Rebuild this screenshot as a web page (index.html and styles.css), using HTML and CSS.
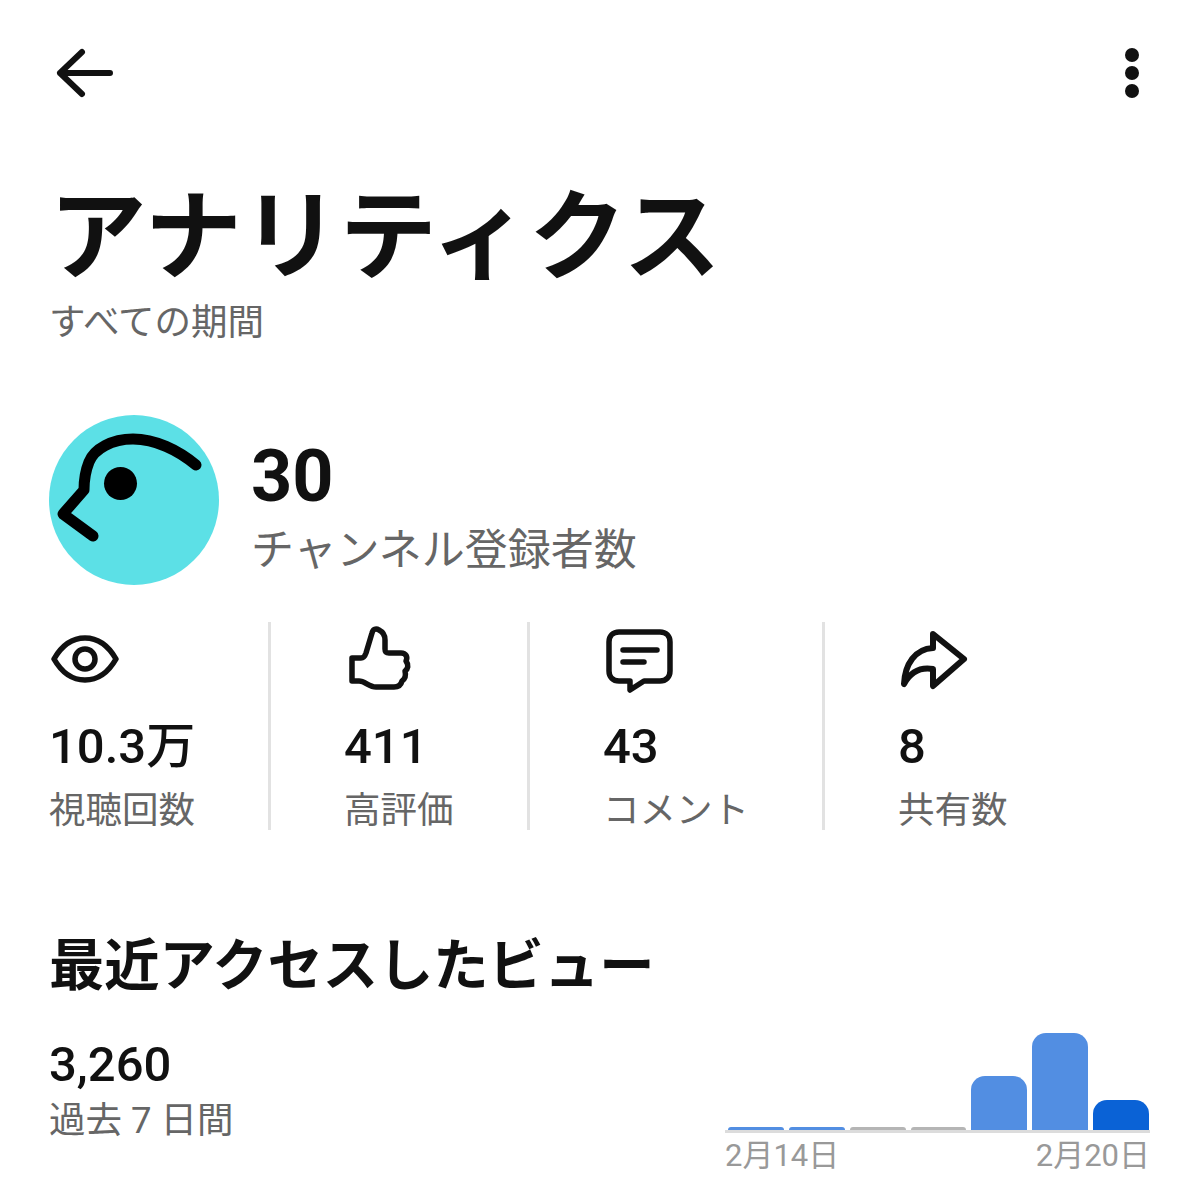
FILE: index.html
```html
<!DOCTYPE html>
<html lang="ja">
<head>
  <meta charset="UTF-8">
  <title>アナリティクス</title>
  <link rel="stylesheet" href="styles.css">
</head>
<body>

  <header class="topbar">
    <svg class="icon-back" viewBox="49 44 70 58">
      <path d="M110 73H60M82 52L60 73L82 94" />
    </svg>
    <div class="menu-dots"><span></span><span></span><span></span></div>
  </header>

  <h1 class="title">アナリティクス</h1>
  <p class="period">すべての期間</p>

  <section class="channel">
    <svg class="avatar" viewBox="49 415 170 170">
      <circle cx="134" cy="500" r="85" fill="#5ce0e6" />
      <path d="M196 465C178 450 155 439 133 439C112 439 94 449 89 462C85 472 84 480 84 490L63 514L93 536" />
      <circle cx="120.500" cy="483.500" r="16.500" fill="#000" />
    </svg>
    <div class="channel-info">
      <div class="subs-count">30</div>
      <div class="subs-label">チャンネル登録者数</div>
    </div>
  </section>

  <section class="stats">
    <div class="stat stat-views">
      <svg class="stat-icon" viewBox="49 625 70 70">
        <path d="M54 659C62 645 73 638 85 638C97 638 108 645 116 659C108 673 97 680 85 680C73 680 62 673 54 659Z" />
        <circle cx="85" cy="659" r="10" />
      </svg>
      <div class="stat-num">10.3万</div>
      <div class="stat-label">視聴回数</div>
    </div>
    <div class="stat stat-likes">
      <svg class="stat-icon" viewBox="344 625 70 70">
        <path d="M352 658H361C364 658 365 656 366 653L372 633C373 629 376 628 379 630C383 632 385 635 385 640V649C385 652 386 653 389 653H401C406 653 408 657 406 661C409 665 408 669 405 671C406 675 405 679 402 681C401 685 399 687 394 687H376C369 687 365 681 359 681H352Z" />
      </svg>
      <div class="stat-num">411</div>
      <div class="stat-label">高評価</div>
    </div>
    <div class="stat stat-comments">
      <svg class="stat-icon" viewBox="603 625 70 70">
        <path d="M619 632H660C666 632 670 636 670 642V671C670 677 666 681 660 681H644L630 690V681H619C613 681 609 677 609 671V642C609 636 613 632 619 632Z" />
        <path d="M623 650H657M623 662H644" />
      </svg>
      <div class="stat-num">43</div>
      <div class="stat-label">コメント</div>
    </div>
    <div class="stat stat-shares">
      <svg class="stat-icon" viewBox="898 625 70 70">
        <path class="share" d="M933 634L964 659L933 686V669C921 667 911 671 904 684C905 664 915 649 933 648Z" />
      </svg>
      <div class="stat-num">8</div>
      <div class="stat-label">共有数</div>
    </div>
  </section>

  <h2 class="recent-title">最近アクセスしたビュー</h2>

  <section class="recent">
    <div>
      <div class="stat-num">3,260</div>
      <div class="recent-label">過去 7 日間</div>
    </div>
    <div class="chart">
      <div class="bars">
        <div class="bar bar-blue" style="height: 3px"></div>
        <div class="bar bar-blue" style="height: 3px"></div>
        <div class="bar bar-grey" style="height: 3px"></div>
        <div class="bar bar-grey" style="height: 3px"></div>
        <div class="bar bar-blue" style="height: 54px"></div>
        <div class="bar bar-blue" style="height: 97px"></div>
        <div class="bar bar-dark" style="height: 30px"></div>
      </div>
      <div class="chart-dates">
        <span>2月14日</span>
        <span>2月20日</span>
      </div>
    </div>
  </section>

</body>
</html>
```

FILE: styles.css
```css
html, body {
  height: 100%;
}

body {
  margin: 0;
  padding: 0 50px 0 49px;
  background-color: #fff;
  color: #111;
  font-family: Roboto, "Noto Sans CJK JP", sans-serif;
  overflow: hidden;
}

svg path {
  fill: none;
  stroke: #111;
  stroke-linecap: round;
  stroke-linejoin: round;
}

.topbar {
  display: flex;
  justify-content: space-between;
  align-items: center;
  height: 58px;
  padding-top: 44px;
}

.icon-back {
  width: 70px;
  height: 58px;
}

.icon-back path {
  stroke-width: 6;
}

.menu-dots {
  display: flex;
  flex-direction: column;
  gap: 4px;
  margin-right: 11px;
  width: 14px;
}

.menu-dots span {
  width: 14px;
  height: 14px;
  border-radius: 50%;
  background-color: #111;
}

.title {
  margin: 69px 0 0;
  font-family: "Noto Sans CJK JP", sans-serif;
  font-size: 97.500px;
  font-weight: 700;
  line-height: 116px;
  white-space: nowrap;
}

.period {
  margin: 8px 0 0;
  color: #666;
  font-size: 36.500px;
  line-height: 56px;
}

.channel {
  display: flex;
  align-items: center;
  gap: 32px;
  margin-top: 64px;
}

.avatar {
  width: 170px;
  height: 170px;
}

.avatar path {
  stroke: #000;
  stroke-width: 11;
}

.channel-info {
  padding-top: 16px;
}

.subs-count {
  font-size: 72px;
  font-weight: 700;
  line-height: 84px;
}

.subs-label {
  color: #666;
  font-size: 43px;
  line-height: 62px;
}

.stats {
  display: grid;
  grid-template-columns: 222px 259px 295px 1fr;
  margin-top: 37px;
  height: 208px;
}

.stat {
  padding-left: 73px;
  border-right: 3px solid #e2e2e2;
}

.stat-views {
  padding-left: 0;
}

.stat-shares {
  border-right: none;
}

.stat-icon {
  display: block;
  width: 70px;
  height: 70px;
  margin-top: 3px;
  margin-bottom: 24px;
}

.stat-icon path,
.stat-icon circle {
  fill: none;
  stroke: #111;
  stroke-width: 5.500;
}

.stat-icon .share {
  stroke-width: 6;
}

.stat-num {
  font-size: 49px;
  font-weight: 500;
  line-height: 56px;
}

.stat-label {
  margin-top: 17px;
  color: #666;
  font-size: 36.500px;
  line-height: 38px;
}

.recent-title {
  margin: 93px 0 0;
  font-family: "Noto Sans CJK JP", sans-serif;
  font-size: 55.300px;
  font-weight: 700;
  line-height: 76px;
  white-space: nowrap;
}

.recent {
  display: flex;
  justify-content: space-between;
  margin-top: 38px;
}

.recent-label {
  margin-top: 3px;
  color: #666;
  font-size: 36.500px;
  line-height: 50px;
}

.chart {
  width: 425px;
  margin-top: -4px;
}

.bars {
  display: flex;
  align-items: flex-end;
  gap: 5px;
  height: 97px;
  padding: 0 1px 0 3px;
  border-bottom: 3px solid #dcdcdc;
}

.bar {
  flex: 1;
  border-radius: 14px 14px 0 0;
}

.bar-blue {
  background-color: #528ee2;
}

.bar-grey {
  background-color: #b5b5b5;
}

.bar-dark {
  background-color: #0a62d6;
}

.chart-dates {
  display: flex;
  justify-content: space-between;
  margin-top: 1px;
  color: #999;
  font-size: 31px;
  line-height: 44px;
}
```
